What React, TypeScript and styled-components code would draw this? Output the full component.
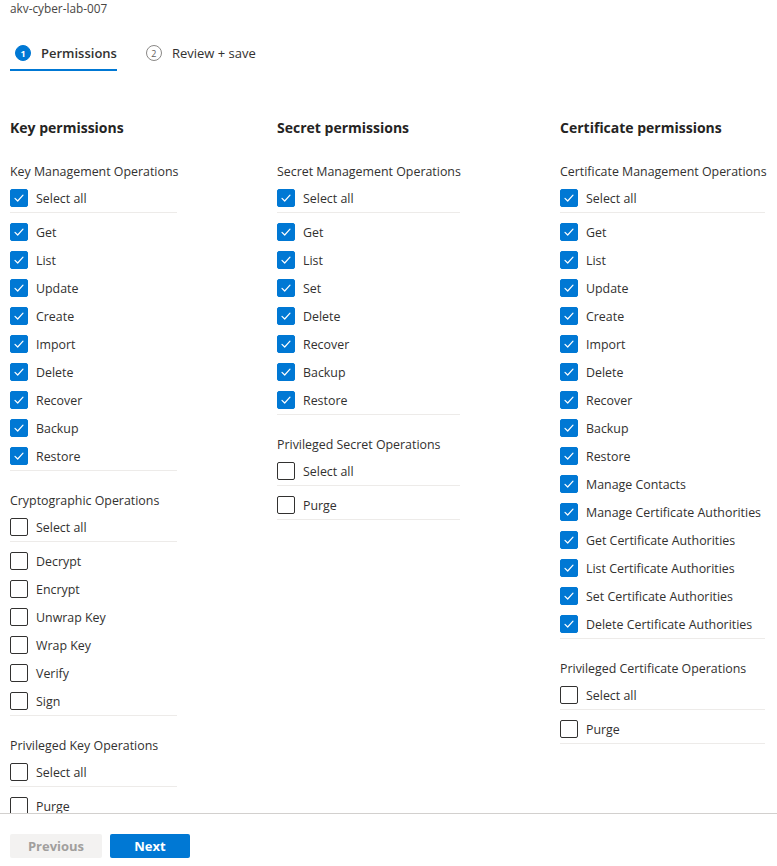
import React from "react";
import styled, { createGlobalStyle } from "styled-components";

const GlobalStyle = createGlobalStyle`
  html, body { margin: 0; padding: 0; background: #ffffff; }
  body {
    font-family: "Open Sans", "Noto Sans", sans-serif;
    color: #323130;
    -webkit-font-smoothing: antialiased;
  }
  * { box-sizing: border-box; }
`;

const Page = styled.div`
  height: 866px;
  display: flex;
  flex-direction: column;
  overflow: hidden;
  background: #ffffff;
`;

const Header = styled.header`
  flex: none;
  padding: 0 10px;
`;

const ResourceName = styled.div`
  font-size: 11.8px;
  line-height: 16px;
  color: #484644;
`;

const Steps = styled.nav`
  display: flex;
  gap: 24px;
  margin-top: 21px;
`;

const Step = styled.div<{ $active?: boolean }>`
  display: flex;
  align-items: center;
  gap: 10px;
  height: 34px;
  padding-left: 5px;
  border-bottom: 2px solid ${(p) => (p.$active ? "#0078d4" : "transparent")};
  font-size: 13px;
  font-weight: ${(p) => (p.$active ? 600 : 400)};
  color: #323130;
`;

const StepNumber = styled.span<{ $active?: boolean }>`
  width: 16px;
  height: 16px;
  border-radius: 50%;
  display: inline-flex;
  align-items: center;
  justify-content: center;
  font-size: 9px;
  font-weight: ${(p) => (p.$active ? 700 : 400)};
  line-height: 1;
  background: ${(p) => (p.$active ? "#0078d4" : "transparent")};
  color: ${(p) => (p.$active ? "#ffffff" : "#605e5c")};
  border: 1px solid ${(p) => (p.$active ? "#0078d4" : "#8a8886")};
`;

const Content = styled.main`
  flex: 1;
  overflow: hidden;
  padding: 47px 10px 0;
`;

const Columns = styled.div`
  display: grid;
  grid-template-columns: 167px 183px 205px;
  column-gap: 100px;
  align-items: start;
`;

const Column = styled.section``;

const ColumnTitle = styled.h2`
  margin: 0 0 23px;
  font-size: 14px;
  line-height: 20px;
  font-weight: 700;
  color: #252423;
  white-space: nowrap;
`;

const Group = styled.div`
  & + & {
    margin-top: 19px;
  }
`;

const GroupTitle = styled.div`
  font-size: 12.4px;
  line-height: 20px;
  padding-top: 1px;
  margin-bottom: 2px;
  color: #323130;
  white-space: nowrap;
`;

const Row = styled.label<{ $divided?: boolean }>`
  display: flex;
  align-items: center;
  gap: 8px;
  height: ${(p) => (p.$divided ? 29 : 28)}px;
  font-size: 12.4px;
  color: #323130;
  white-space: nowrap;
  border-bottom: ${(p) => (p.$divided ? "1px solid #edebe9" : "none")};
`;

const ItemList = styled.div`
  padding-top: 5px;
  border-bottom: 1px solid #edebe9;
`;

const Box = styled.span<{ $checked?: boolean }>`
  flex: none;
  width: 18px;
  height: 18px;
  border-radius: 2px;
  display: inline-flex;
  align-items: center;
  justify-content: center;
  background: ${(p) => (p.$checked ? "#0078d4" : "#ffffff")};
  border: 1px solid ${(p) => (p.$checked ? "#0078d4" : "#323130")};
`;

const Footer = styled.footer`
  flex: none;
  height: 53px;
  border-top: 1px solid #d2d0ce;
  padding: 20px 10px 0;
  display: flex;
  gap: 8px;
  align-items: flex-start;
`;

const Button = styled.button<{ $primary?: boolean; $width: number }>`
  width: ${(p) => p.$width}px;
  height: 24px;
  border: none;
  border-radius: 2px;
  font-family: inherit;
  font-size: 13px;
  font-weight: 700;
  background: ${(p) => (p.$primary ? "#0078d4" : "#f3f2f1")};
  color: ${(p) => (p.$primary ? "#ffffff" : "#a19f9d")};
  padding: 0;
`;

const Check = () => (
  <svg width="12" height="12" viewBox="0 0 12 12" aria-hidden>
    <polyline
      points="2,6.3 4.7,9 10,3.2"
      fill="none"
      stroke="#ffffff"
      strokeWidth="1.2"
      strokeLinecap="round"
      strokeLinejoin="round"
    />
  </svg>
);

type GroupData = { title: string; checked: boolean; items: string[] };
type ColumnData = { title: string; groups: GroupData[] };

const data: ColumnData[] = [
  {
    title: "Key permissions",
    groups: [
      {
        title: "Key Management Operations",
        checked: true,
        items: ["Get", "List", "Update", "Create", "Import", "Delete", "Recover", "Backup", "Restore"],
      },
      {
        title: "Cryptographic Operations",
        checked: false,
        items: ["Decrypt", "Encrypt", "Unwrap Key", "Wrap Key", "Verify", "Sign"],
      },
      { title: "Privileged Key Operations", checked: false, items: ["Purge"] },
    ],
  },
  {
    title: "Secret permissions",
    groups: [
      {
        title: "Secret Management Operations",
        checked: true,
        items: ["Get", "List", "Set", "Delete", "Recover", "Backup", "Restore"],
      },
      { title: "Privileged Secret Operations", checked: false, items: ["Purge"] },
    ],
  },
  {
    title: "Certificate permissions",
    groups: [
      {
        title: "Certificate Management Operations",
        checked: true,
        items: [
          "Get",
          "List",
          "Update",
          "Create",
          "Import",
          "Delete",
          "Recover",
          "Backup",
          "Restore",
          "Manage Contacts",
          "Manage Certificate Authorities",
          "Get Certificate Authorities",
          "List Certificate Authorities",
          "Set Certificate Authorities",
          "Delete Certificate Authorities",
        ],
      },
      { title: "Privileged Certificate Operations", checked: false, items: ["Purge"] },
    ],
  },
];

const CheckItem = ({ label, checked, divided }: { label: string; checked: boolean; divided?: boolean }) => (
  <Row $divided={divided}>
    <Box $checked={checked}>{checked && <Check />}</Box>
    <span>{label}</span>
  </Row>
);

export default function App() {
  return (
    <>
      <GlobalStyle />
      <Page>
        <Header>
          <ResourceName>akv-cyber-lab-007</ResourceName>
          <Steps>
            <Step $active>
              <StepNumber $active>1</StepNumber>
              Permissions
            </Step>
            <Step>
              <StepNumber>2</StepNumber>
              Review + save
            </Step>
          </Steps>
        </Header>
        <Content>
          <Columns>
            {data.map((col) => (
              <Column key={col.title}>
                <ColumnTitle>{col.title}</ColumnTitle>
                {col.groups.map((g) => (
                  <Group key={g.title}>
                    <GroupTitle>{g.title}</GroupTitle>
                    <CheckItem label="Select all" checked={g.checked} divided />
                    <ItemList>
                      {g.items.map((it) => (
                        <CheckItem key={it} label={it} checked={g.checked} />
                      ))}
                    </ItemList>
                  </Group>
                ))}
              </Column>
            ))}
          </Columns>
        </Content>
        <Footer>
          <Button $width={92} disabled>
            Previous
          </Button>
          <Button $width={80} $primary>
            Next
          </Button>
        </Footer>
      </Page>
    </>
  );
}
